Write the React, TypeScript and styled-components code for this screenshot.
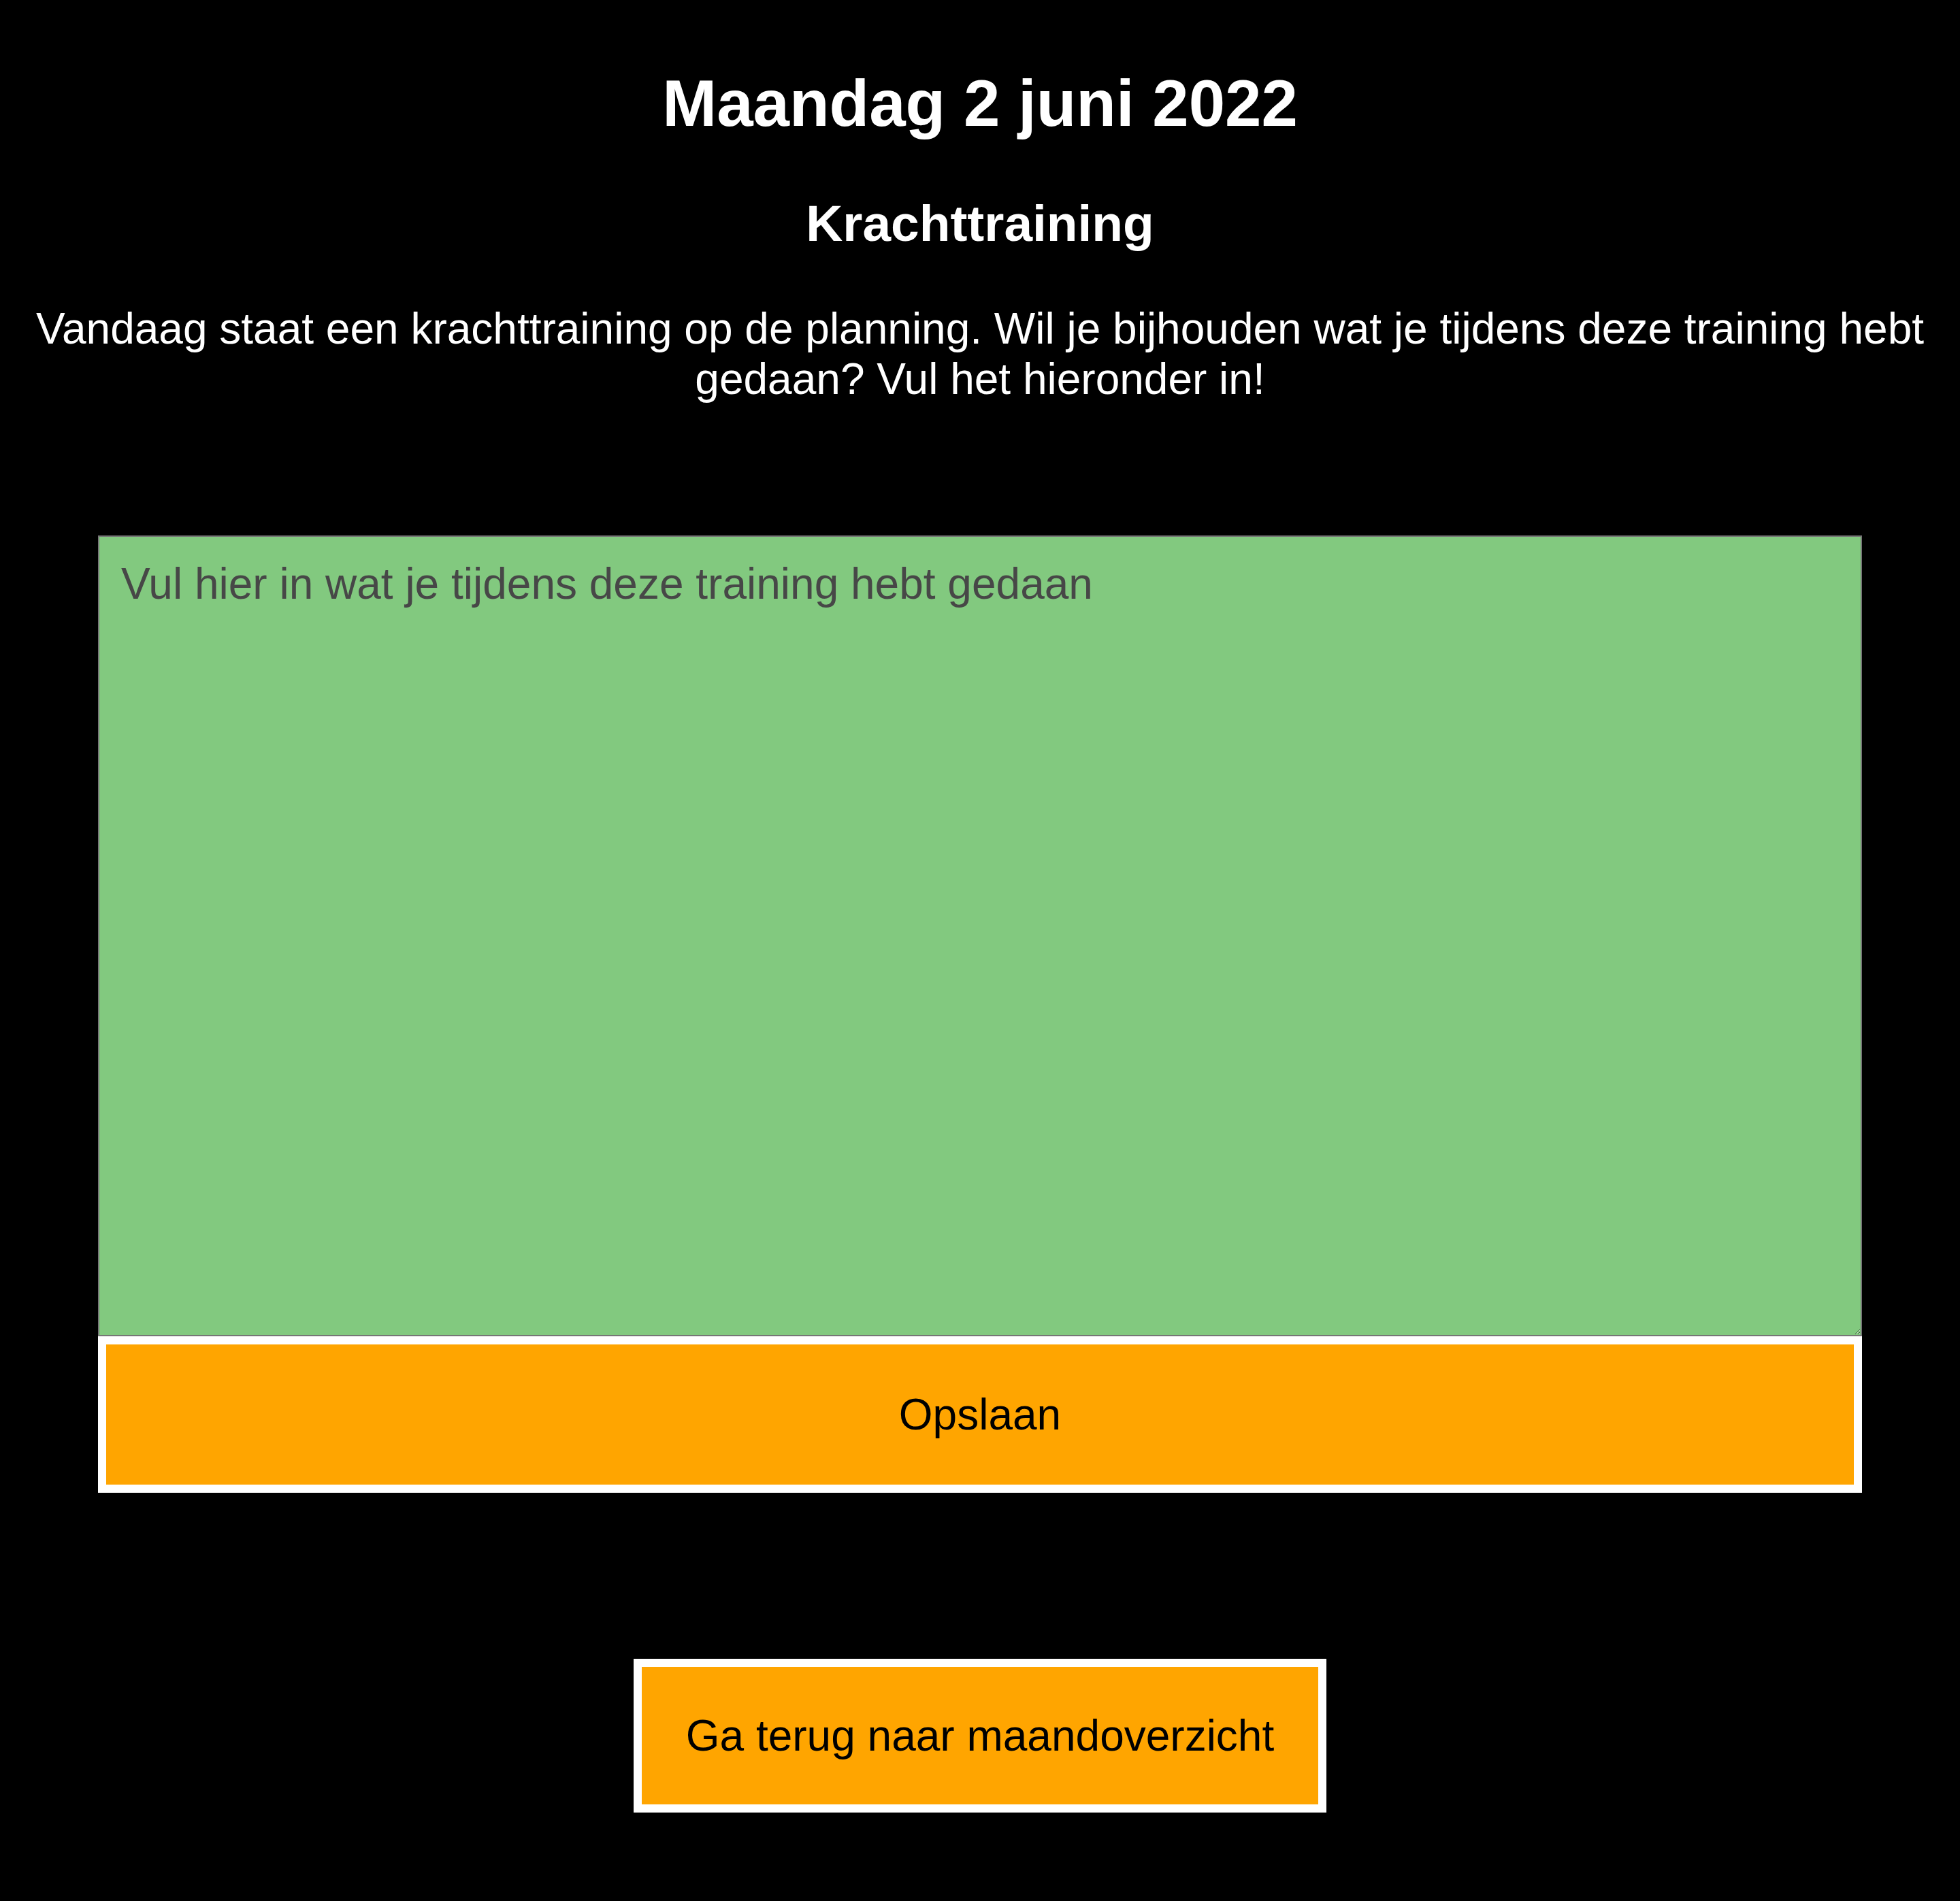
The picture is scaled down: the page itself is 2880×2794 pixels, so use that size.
import React from "react";
import styled, { createGlobalStyle } from "styled-components";

const GlobalStyle = createGlobalStyle`
  html, body {
    margin: 0;
    padding: 0;
    background: #000000;
  }
  body {
    font-family: "Liberation Sans", Arial, Helvetica, sans-serif;
    color: #ffffff;
  }
`;

const Page = styled.main`
  display: flex;
  flex-direction: column;
  align-items: center;
  padding: 97px 16px 132px;
  text-align: center;
  background: #000000;
`;

const Title = styled.h1`
  margin: 0;
  font-size: 96px;
  font-weight: 700;
  line-height: normal;
  color: #ffffff;
`;

const Subtitle = styled.h2`
  margin: 78px 0 0;
  font-size: 74.88px;
  font-weight: 700;
  line-height: normal;
  color: #ffffff;
`;

const Intro = styled.p`
  margin: 75px 0 0;
  font-size: 64px;
  line-height: normal;
  color: #ffffff;
`;

const Form = styled.form`
  width: 2592px;
  margin-top: 193px;
  display: flex;
  flex-direction: column;
`;

const Notes = styled.textarea`
  display: block;
  box-sizing: border-box;
  width: 100%;
  height: 1177px;
  margin: 0;
  padding: 32px;
  border: 2px solid #767676;
  background: #82c97f;
  color: #000000;
  font-family: "Liberation Sans", Arial, Helvetica, sans-serif;
  font-size: 64px;
  line-height: normal;
  outline: none;
  resize: both;
  overflow: auto;

  &::placeholder {
    color: #474747;
    opacity: 1;
  }
`;

const ActionButton = styled.button<{ $wide?: boolean }>`
  display: block;
  box-sizing: border-box;
  width: ${(p) => (p.$wide ? "100%" : "auto")};
  margin: 0;
  padding: ${(p) => (p.$wide ? "66px 0" : "64px 65px")};
  border: 12px solid #ffffff;
  background: #ffa500;
  color: #000000;
  font-family: "Liberation Sans", Arial, Helvetica, sans-serif;
  font-size: 64px;
  line-height: normal;
  cursor: pointer;
`;

const BackRow = styled.div`
  margin-top: 244px;
  display: flex;
  justify-content: center;
`;

export default function App() {
  return (
    <>
      <GlobalStyle />
      <Page>
        <Title>Maandag 2 juni 2022</Title>
        <Subtitle>Krachttraining</Subtitle>
        <Intro>
          Vandaag staat een krachttraining op de planning. Wil je bijhouden wat je tijdens deze training hebt
          gedaan? Vul het hieronder in!
        </Intro>
        <Form onSubmit={(e) => e.preventDefault()}>
          <Notes placeholder="Vul hier in wat je tijdens deze training hebt gedaan" />
          <ActionButton $wide type="submit">
            Opslaan
          </ActionButton>
        </Form>
        <BackRow>
          <ActionButton type="button">Ga terug naar maandoverzicht</ActionButton>
        </BackRow>
      </Page>
    </>
  );
}
